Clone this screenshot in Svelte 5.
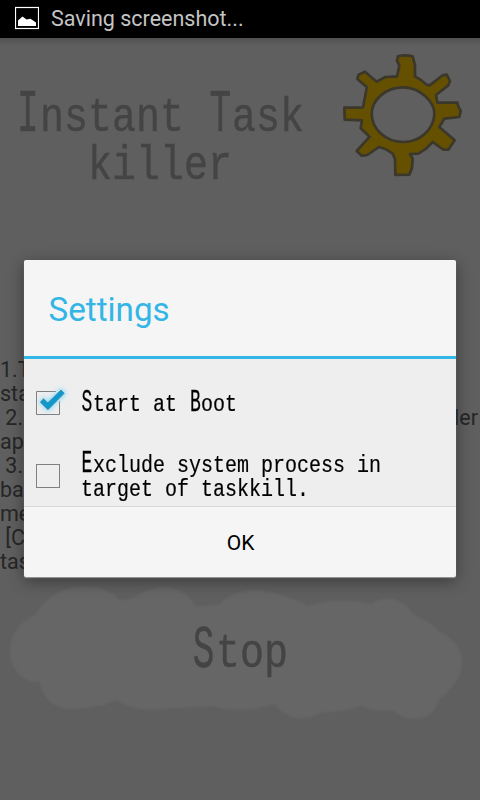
<script>
  let startAtBoot = $state(true);
  let excludeSystem = $state(false);
  let open = $state(true);

  // left part and right part of each help line
  const helpLines = [
    ['1.T', ''],
    ['sta', ''],
    [' 2.', 'ler'],
    ['ap', ''],
    [' 3.', ''],
    ['ba', ''],
    ['me', ''],
    [' [C', ''],
    ['tas', '']
  ];
</script>

<!-- handwriting style line: capitals are drawn taller than the rest -->
{#snippet pen(text)}
  <span class="pen">{#each text.split(/([A-Z])/) as part}{#if /^[A-Z]$/.test(part)}<span class="cap">{part}</span>{:else}{part}{/if}{/each}</span>
{/snippet}

{#snippet checkbox(checked)}
  <svg class="box" width="34" height="34" viewBox="0 0 34 34">
    {#if checked}
      <path d="M25 5.5H5.5V28.5H28.5V15" fill="none" stroke="#808080" />
      <path class="glow" d="M9 16L12.500 12.300L16.700 16L30 3.500L34 7.300L17 24.500Z" />
      <path d="M9.300 16.200L12.400 12.800L16.800 16.800L30 4L33.200 7.300L17 23.700Z" fill="#0f98cb" stroke="#3d83a0" stroke-width=".7" />
    {:else}
      <rect x="5.5" y="5.5" width="23" height="23" fill="none" stroke="#808080" />
    {/if}
  </svg>
{/snippet}

<div class="screen">
  <div class="status">
    <svg width="24" height="24" viewBox="0 0 24 24">
      <rect x=".5" y="1.5" width="23" height="21" fill="none" stroke="#fff" stroke-width="1.2" />
      <path d="M3 20V14.500L7.500 10.500L11.500 13.500L15.500 12.800L21 16.500V20Z" fill="#fff" />
    </svg>
    <span>Saving screenshot...</span>
  </div>

  <div class="app">
    <header>
      <h1>
        {@render pen('Instant Task')}
        {@render pen('killer')}
      </h1>
      <svg class="gear" width="150" height="150" viewBox="0 0 450 450">
        <path
          fill-rule="evenodd"
          d="M204 49Q224 43 248 49L255 76L255 109Q276 120 290 134L299 136L339 105L350 104L360 123L355 136L318 165L322 188L382 188L386 202L392 212L388 231L343 236L328 261L374 301L355 329L340 329L308 306L287 327L265 341L240 342L248 356L246 384L238 404L196 405L195 357L188 341L166 327L147 321L112 345L95 347L80 333L119 290L92 265L96 241L44 239L43 203L99 202L109 150L110 141L82 117L86 104L105 95L140 125L166 111L201 109L208 77L201 62Z M219 142C166 142 126 180 125 221C126 267 166 306 219 306C271 306 311 268 313 222C314 184 269 142 219 142Z"
        />
      </svg>
    </header>

    <div class="help">
      {#each helpLines as [left, right]}
        <p><span>{left}</span><span>{right}</span></p>
      {/each}
    </div>

    <button class="stop">
      <svg width="480" height="170" viewBox="0 0 480 170">
        <path d="M36 44C48 24 65 17 82 17C98 16 111 20 118 29Q128 31 136 26C150 18 159 17 166 17C181 18 190 26 195 36Q207 36 220 34C230 24 242 20 256 20C278 22 293 28 308 36C328 29 352 30 371 34C381 27 393 27 400 32Q409 36 413 44Q431 52 440 62C456 69 462 80 462 91C462 108 452 120 439 129C435 145 424 149 413 149C405 149 399 146 393 140Q377 143 361 136Q342 143 323 142C302 154 286 148 274 134Q254 140 240 140Q226 140 211 136Q189 138 170 138C147 142 129 139 116 130C103 138 82 139 67 139C53 137 42 128 40 112C22 113 10 99 10 80C10 64 21 51 36 44Z" />
      </svg>
      {@render pen('Stop')}
    </button>
  </div>

  {#if open}
    <div class="dialog">
      <h2>Settings</h2>
      <div class="options">
        <button class="row first" onclick={() => (startAtBoot = !startAtBoot)}>
          {@render checkbox(startAtBoot)}
          <span class="label">{@render pen('Start at Boot')}</span>
        </button>
        <button class="row second" onclick={() => (excludeSystem = !excludeSystem)}>
          {@render checkbox(excludeSystem)}
          <span class="label">
            {@render pen('Exclude system process in')}
            {@render pen('target of taskkill.')}
          </span>
        </button>
      </div>
      <button class="ok" onclick={() => (open = false)}>OK</button>
    </div>
  {/if}
</div>

<style>
  :global(body) { margin: 0; background: #5f5f5f; }
  button { border: 0; padding: 0; margin: 0; background: none; font: inherit; color: inherit; text-align: left; }
  .screen { position: relative; width: 480px; height: 800px; overflow: hidden; background: #5f5f5f; font-family: Roboto, sans-serif; }

  .status { display: flex; align-items: center; gap: 12px; height: 38px; padding-left: 15px; box-sizing: border-box; background: #000; color: #c4c4c4; font-size: 21.5px; }
  .status svg { margin-bottom: 2px; }
  .status span { margin-bottom: 1px; white-space: nowrap; }

  .app { background: linear-gradient(#505050, #5f5f5f 7px); height: 762px; }
  header { display: flex; height: 320px; }
  h1 { width: 320px; margin: 0; padding-top: 56px; box-sizing: border-box; font-weight: normal; font-size: 48px; line-height: 48px; color: #444; }
  /* the lines are squeezed afterwards, so they need more room than the column has */
  h1 .pen { width: 480px; margin-left: -80px; text-align: center; }
  h1 .pen, .stop .pen { -webkit-text-stroke: .4px #444; }
  .gear { margin: 2px 0 0 10px; flex: none; }
  .gear path { fill: #655000; stroke: #3b372b; stroke-width: 8; stroke-linejoin: round; }

  /* narrow monospace lettering */
  .pen { display: block; font-family: "Liberation Mono", monospace; white-space: pre; transform: scaleX(.8332); }
  .cap { display: inline-block; transform: scale(.9, 1.27); transform-origin: 50% .757em; }

  .help { height: 212px; color: #262626; font-size: 21.5px; line-height: 24px; }
  .help p { display: flex; justify-content: space-between; margin: 0; padding-right: 2px; white-space: pre; }

  .stop { display: grid; width: 480px; height: 170px; }
  .stop svg, .stop .pen { grid-area: 1 / 1; }
  .stop svg { fill: #666; filter: blur(1px); }
  .stop .pen { padding-top: 60px; font-size: 48px; line-height: 48px; color: #444; text-align: center; z-index: 1; }
  .stop .cap { transform-origin: 40% .757em; }

  .dialog { position: absolute; left: 24px; top: 260px; width: 432px; height: 317px; display: flex; flex-direction: column; background: #f5f5f5; border-radius: 2px; overflow: hidden; box-shadow: 0 1px 1px #999, 0 4px 16px rgba(0, 0, 0, .4); }
  h2 { height: 99px; margin: 0; padding: 0 0 0 24.5px; box-sizing: border-box; border-bottom: 3px solid #33b5e5; font-size: 33.2px; font-weight: normal; line-height: 99px; color: #33b5e5; }
  .options { height: 148px; box-sizing: border-box; border-bottom: 1px solid #d8d8d8; background: #eee; color: #000; }
  .row { display: flex; align-items: center; width: 100%; padding-left: 7px; box-sizing: border-box; }
  .row.first { height: 88px; }
  .row.second { height: 58px; }
  .box { flex: none; overflow: visible; }
  .glow { fill: #8fdcf8; stroke: #8fdcf8; stroke-width: 2; filter: blur(2px); }
  .label { margin-left: 15.5px; padding-top: 3px; font-size: 24px; line-height: 24px; -webkit-text-stroke: .2px #000; }
  .label .pen { transform-origin: left; }
  .ok { flex: 1; padding: 1px 0 0 1px; text-align: center; font-size: 21px; color: #000; }
</style>
